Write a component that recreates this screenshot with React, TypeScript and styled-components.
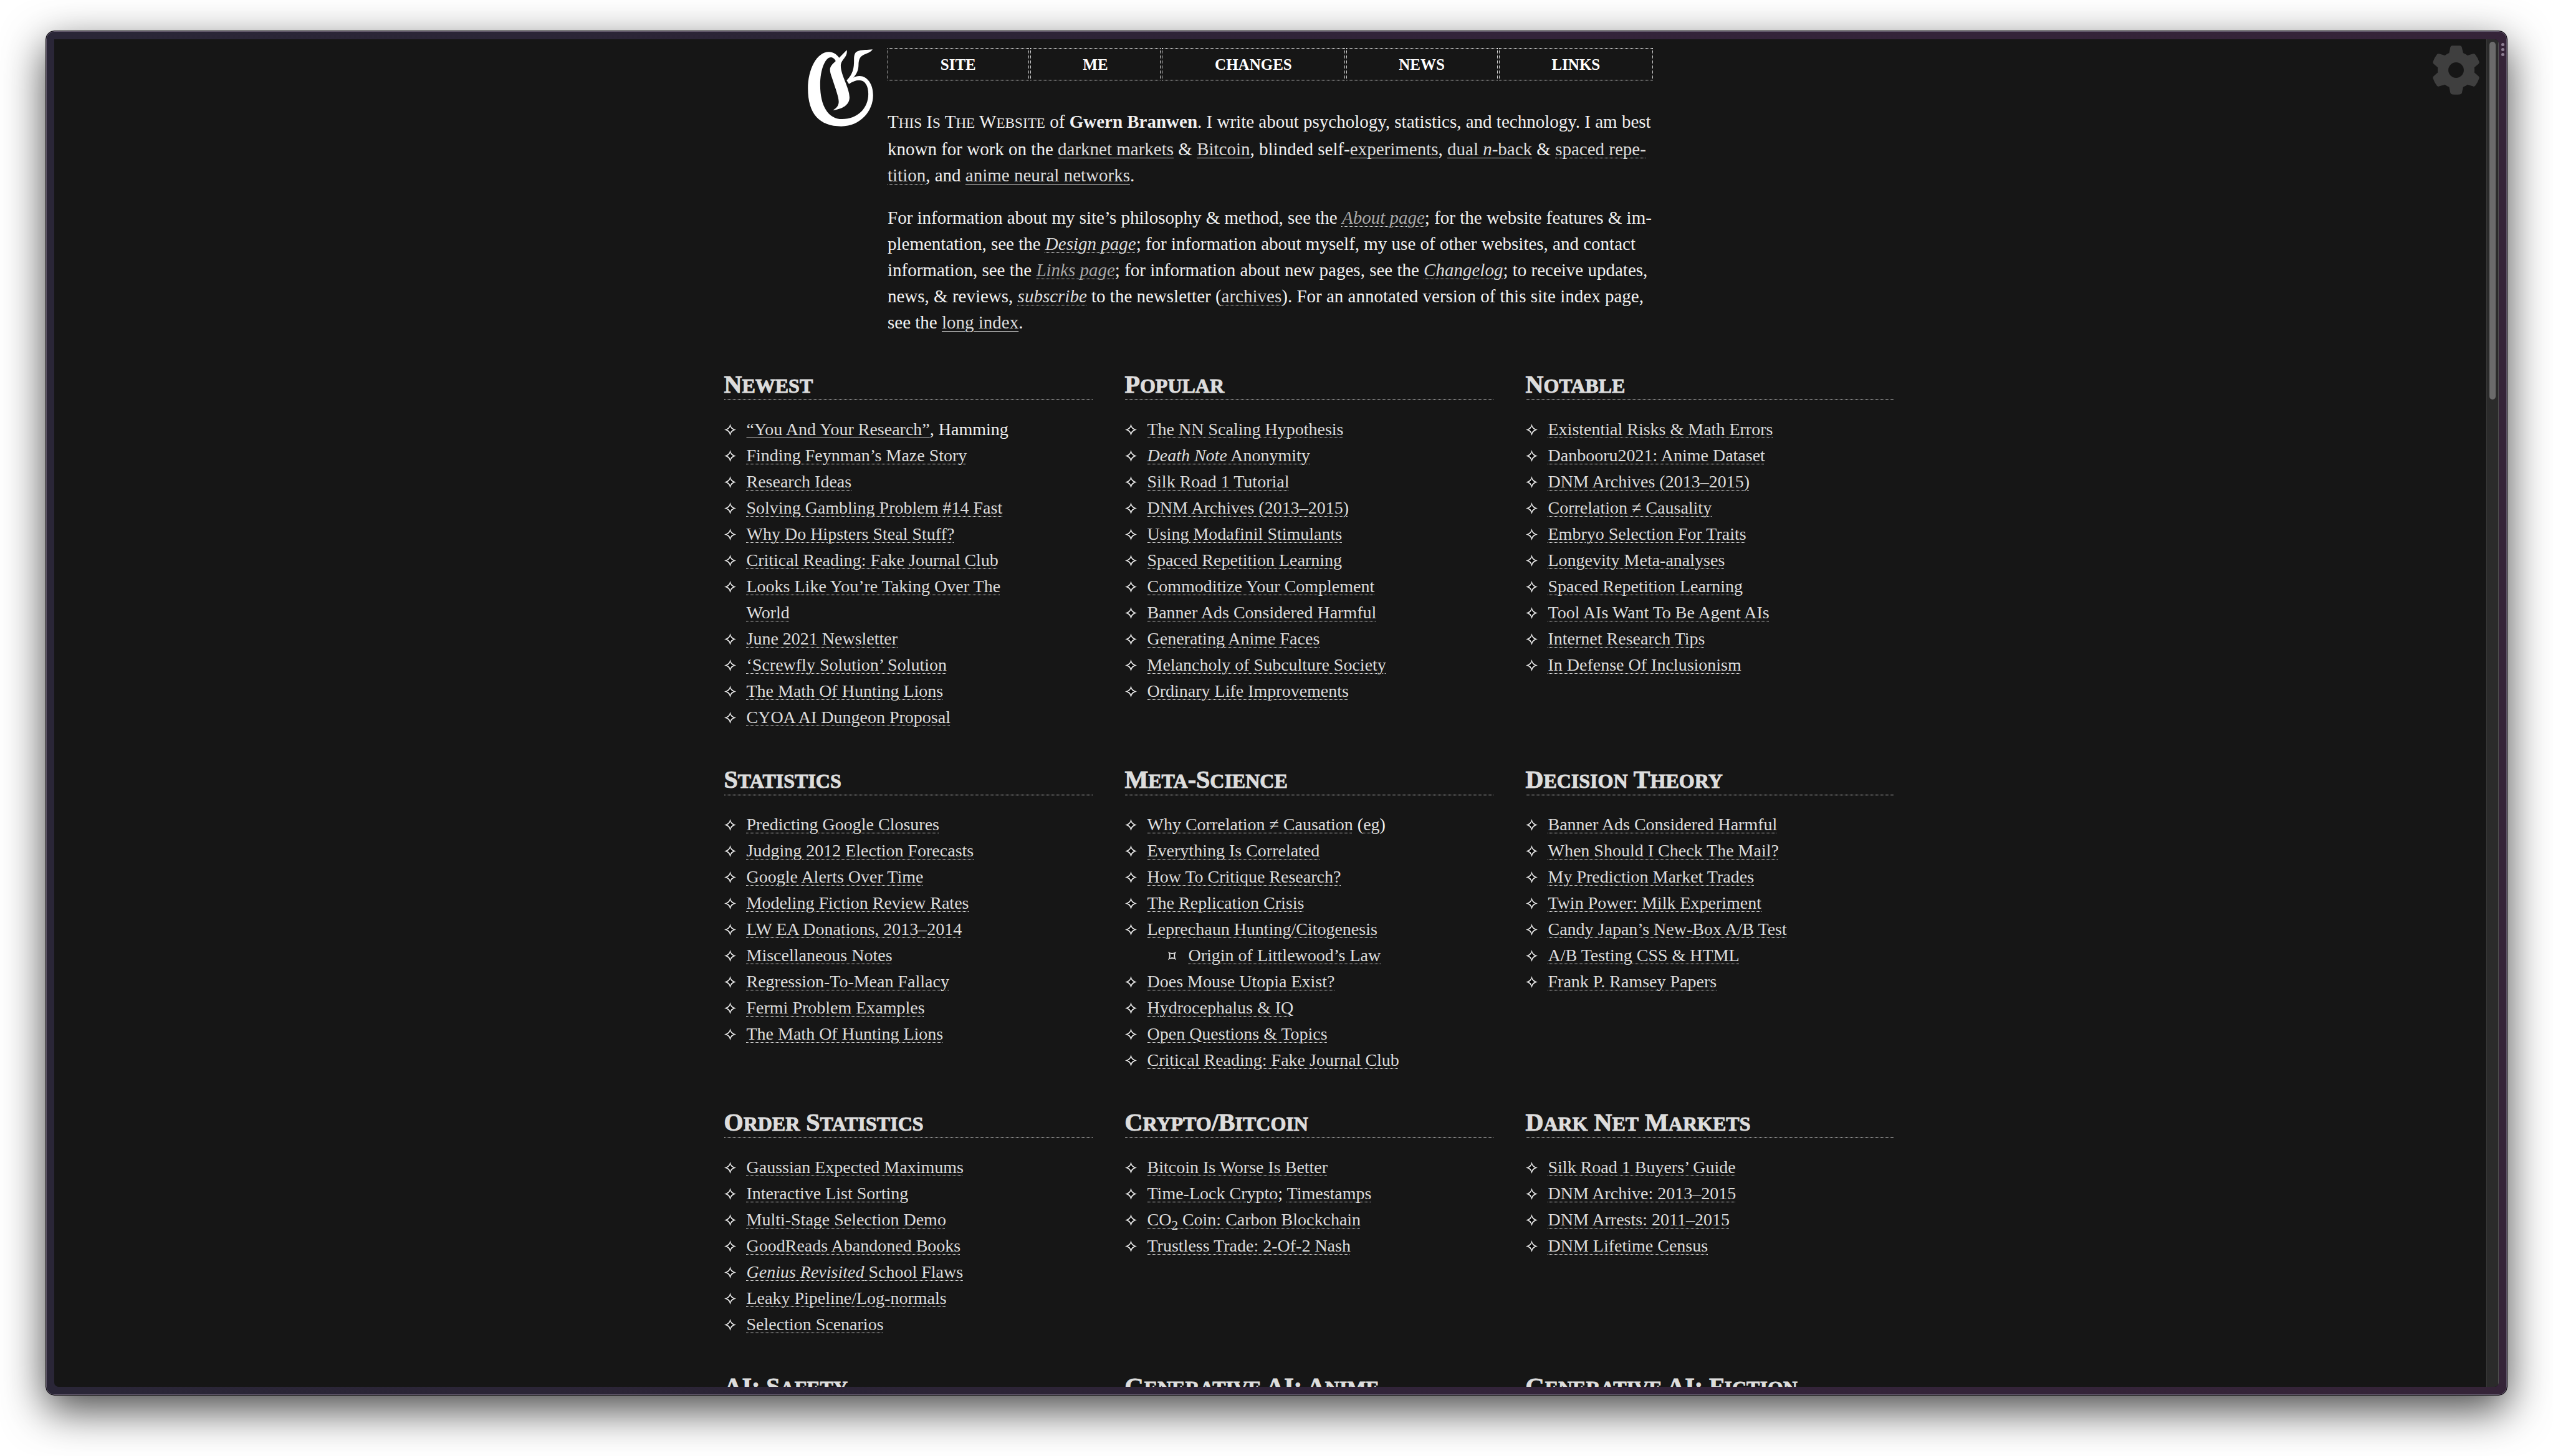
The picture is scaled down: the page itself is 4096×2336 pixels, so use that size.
import React from "react";
import styled, { createGlobalStyle } from "styled-components";

const serif = `"Liberation Serif", "Times New Roman", serif`;

const GlobalStyle = createGlobalStyle`
  *, *::before, *::after { box-sizing: border-box; }
  html, body, #root { height: 100%; margin: 0; }
  body { background: #fff; font-family: ${serif}; overflow: hidden; }
`;

const Desktop = styled.div`
  display: flex;
  height: 100vh;
  padding: 49px 73px 97px;
`;

const Window = styled.div`
  flex: 1;
  display: flex;
  min-width: 0;
  position: relative;
  padding: 13px;
  border: 1px solid #08060a;
  border-radius: 14px;
  background: linear-gradient(90deg, #2a2637 0%, #2c2436 38%, #33243a 60%, #352438 100%);
  box-shadow: inset 0 0 0 1px #635a6c, 0 23px 68px rgba(0, 0, 0, 0.72);
`;

const Viewport = styled.div`
  flex: 1;
  display: flex;
  min-width: 0;
  overflow: hidden;
  position: relative;
  border-radius: 0 7px 7px 7px;
  background: #161616;
`;

const Page = styled.div`
  flex: 1;
  min-width: 0;
  padding-top: 14px;
  overflow: hidden;
  color: #f1f1f1;
  font-size: 28px;
  line-height: 42px;
`;

const Scrollbar = styled.div`
  display: flex;
  width: 20px;
  padding: 4px 4px 0;
  border-left: 1px solid #3c3c3c;
  border-right: 1px solid #4d4d4d;
  background: #2b2b2b;
`;

const Thumb = styled.div`
  flex: 1;
  height: 574px;
  border-radius: 6px;
  background: #6b6b6b;
`;

const Dots = styled.div`
  position: absolute;
  top: 19px;
  right: 4px;
  display: grid;
  gap: 3px;
`;

const Dot = styled.span`
  width: 5px;
  height: 5px;
  border-radius: 50%;
  background: #8d7f93;
`;

const SettingsButton = styled.button`
  position: absolute;
  top: 10px;
  right: 31px;
  display: block;
  padding: 0;
  border: 0;
  background: none;
  color: #3f3f3f;
  cursor: pointer;

  svg { display: block; }
`;

const Intro = styled.header`
  display: grid;
  grid-template-columns: 1fr minmax(0, 1228px) 1fr;
  column-gap: 23px;
`;

const LogoLink = styled.a`
  justify-self: end;
  align-self: start;
  padding-top: 2px;

  svg { display: block; }
`;

const Nav = styled.nav`
  display: flex;
  gap: 2px;
`;

const NavLink = styled.a`
  flex: 1 1 auto;
  padding: 5px 0 3px;
  border: 1px dotted #fff;
  color: #fff;
  font-size: 25px;
  font-weight: 700;
  text-align: center;
  text-decoration: none;
  text-transform: uppercase;
`;

const Prose = styled.div`
  padding-top: 45px;
  font-size: 29px;
  white-space: nowrap;
`;

const Paragraph = styled.p`
  margin: 0 0 26px;

  &:last-child { margin-bottom: 0; }
`;

const Link = styled.a<{ $solid?: boolean; $dim?: boolean }>`
  color: ${(p) => (p.$dim ? "#a8a8a8" : "#dddddd")};
  text-decoration: underline ${(p) => (p.$solid ? "solid #dddddd" : "dotted #ffffff")} 1px;
  text-underline-offset: 4px;
`;

const Small = styled.span`
  font-size: 0.8em;
  text-transform: uppercase;
`;

const Directory = styled.main`
  display: grid;
  grid-template-columns: repeat(3, minmax(0, 591px));
  justify-content: center;
  gap: 57px 52px;
  padding: 57px 0 0 124px;
`;

const Heading = styled.h2`
  margin: 0 0 26px;
  border-bottom: 1px dotted #fff;
  color: #dddddd;
  font-size: 40px;
  line-height: 44px;
  -webkit-text-stroke: 1px #dddddd;
`;

const List = styled.ul<{ $nested?: boolean }>`
  margin: 0;
  padding: ${(p) => (p.$nested ? "0 0 0 30px" : "0 120px 0 0")};
  list-style: none;
`;

const Item = styled.li`
  display: grid;
  grid-template-columns: 19px 1fr;
  column-gap: 17px;
`;

const ItemBody = styled.div`
  min-width: 0;
`;

const Bullet = styled.svg`
  justify-self: center;
  margin-top: 12px;
`;

const Sub = styled.sub`
  font-size: 21px;
  line-height: 0;
`;

function SmallCaps({ text }: { text: string }) {
  return (
    <>
      {text.split(/([a-z]+)/).map((part, i) =>
        i % 2 ? <Small key={i}>{part}</Small> : part
      )}
    </>
  );
}

function Star({ nested }: { nested?: boolean }) {
  return (
    <Bullet width="19" height="19" viewBox="-10 -10 20 20" aria-hidden="true">
      <g transform={nested ? "rotate(45)" : undefined}>
        <path d="M0-10Q1.6-1.6 10 0Q1.6 1.6 0 10Q-1.6 1.6-10 0Q-1.6-1.6 0-10Z" fill="#e4e4e4" />
        <path d="M0-5.4Q1.2-1.2 5.4 0Q1.2 1.2 0 5.4Q-1.2 1.2-5.4 0Q-1.2-1.2 0-5.4Z" fill="#000" />
      </g>
    </Bullet>
  );
}

function Logo() {
  return (
    <svg width="105" height="124" viewBox="45 47 480 566" role="img" aria-label="Home">
      <path
        fill="#fff"
        d="M331 52L275 109C255 82 230 66 200 66C110 66 46 195 46 335C46 520 130 612 290 612C430 612 524 500 524 385C524 300 480 243 425 243C405 243 390 247 378 256C405 225 416 200 417 165C418 115 430 96 470 81C500 70 512 60 520 48C480 53 450 49 420 58C390 66 384 85 384 125C384 185 378 225 330 275L347 301C375 283 400 274 422 274C465 274 489 315 489 375C489 480 410 559 297 559C195 559 136 460 136 310C136 190 175 106 214 106C230 106 242 118 250 133C222 158 208 175 208 196C208 215 214 230 222 255C250 340 272 400 272 432C272 460 255 480 229 494C300 486 351 455 351 400C351 330 287 235 287 170C287 120 340 105 331 52Z"
      />
    </svg>
  );
}

function Gear() {
  return (
    <svg width="75" height="79" viewBox="320 215 342 362" aria-hidden="true">
      <path
        fill="currentColor"
        fillRule="evenodd"
        d="M464 216H518Q530 216 533 226L543 270Q560 277 575 288L616 276Q626 273 632 281Q651 304 661 335Q663 343 656 350L625 376Q628 396 625 413L656 441Q663 448 661 456Q651 487 632 510Q626 518 616 515L575 502Q560 514 543 520L534 563Q531 574 518 575Q491 577 464 575Q452 574 449 563L440 520Q423 514 409 502L366 515Q356 518 350 510Q331 487 321 456Q319 448 326 441L357 413Q355 396 357 376L326 350Q319 343 321 335Q331 304 350 281Q356 273 366 276L409 288Q423 277 440 270L449 226Q452 216 464 216ZM491 339A57 57 0 1 0 491 453A57 57 0 1 0 491 339Z"
      />
    </svg>
  );
}

type Entry = React.ReactNode;

const link = (text: React.ReactNode, solid = false) => (
  <Link href="#" $solid={solid}>{text}</Link>
);

const sections: { title: string; items: Entry[] }[] = [
  {
    title: "Newest",
    items: [
      <>{link("“You And Your Research”", true)}, Hamming</>,
      "Finding Feynman’s Maze Story",
      "Research Ideas",
      "Solving Gambling Problem #14 Fast",
      "Why Do Hipsters Steal Stuff?",
      "Critical Reading: Fake Journal Club",
      "Looks Like You’re Taking Over The World",
      "June 2021 Newsletter",
      "‘Screwfly Solution’ Solution",
      "The Math Of Hunting Lions",
      "CYOA AI Dungeon Proposal",
    ],
  },
  {
    title: "Popular",
    items: [
      "The NN Scaling Hypothesis",
      link(<><i>Death Note</i> Anonymity</>),
      "Silk Road 1 Tutorial",
      "DNM Archives (2013–2015)",
      "Using Modafinil Stimulants",
      "Spaced Repetition Learning",
      "Commoditize Your Complement",
      "Banner Ads Considered Harmful",
      "Generating Anime Faces",
      "Melancholy of Subculture Society",
      "Ordinary Life Improvements",
    ],
  },
  {
    title: "Notable",
    items: [
      "Existential Risks & Math Errors",
      "Danbooru2021: Anime Dataset",
      "DNM Archives (2013–2015)",
      "Correlation ≠ Causality",
      "Embryo Selection For Traits",
      "Longevity Meta-analyses",
      "Spaced Repetition Learning",
      "Tool AIs Want To Be Agent AIs",
      "Internet Research Tips",
      "In Defense Of Inclusionism",
    ],
  },
  {
    title: "Statistics",
    items: [
      "Predicting Google Closures",
      "Judging 2012 Election Forecasts",
      "Google Alerts Over Time",
      "Modeling Fiction Review Rates",
      "LW EA Donations, 2013–2014",
      "Miscellaneous Notes",
      "Regression-To-Mean Fallacy",
      "Fermi Problem Examples",
      "The Math Of Hunting Lions",
    ],
  },
  {
    title: "Meta-Science",
    items: [
      <>{link("Why Correlation ≠ Causation")} ({link("eg")})</>,
      "Everything Is Correlated",
      "How To Critique Research?",
      "The Replication Crisis",
      <>
        {link("Leprechaun Hunting/Citogenesis")}
        <List $nested>
          <Item>
            <Star nested />
            <ItemBody>{link("Origin of Littlewood’s Law")}</ItemBody>
          </Item>
        </List>
      </>,
      "Does Mouse Utopia Exist?",
      "Hydrocephalus & IQ",
      "Open Questions & Topics",
      "Critical Reading: Fake Journal Club",
    ],
  },
  {
    title: "Decision Theory",
    items: [
      "Banner Ads Considered Harmful",
      "When Should I Check The Mail?",
      "My Prediction Market Trades",
      "Twin Power: Milk Experiment",
      "Candy Japan’s New-Box A/B Test",
      "A/B Testing CSS & HTML",
      "Frank P. Ramsey Papers",
    ],
  },
  {
    title: "Order Statistics",
    items: [
      "Gaussian Expected Maximums",
      "Interactive List Sorting",
      "Multi-Stage Selection Demo",
      "GoodReads Abandoned Books",
      link(<><i>Genius Revisited</i> School Flaws</>),
      "Leaky Pipeline/Log-normals",
      "Selection Scenarios",
    ],
  },
  {
    title: "Crypto/Bitcoin",
    items: [
      "Bitcoin Is Worse Is Better",
      <>{link("Time-Lock Crypto")}; {link("Timestamps")}</>,
      link(<>CO<Sub>2</Sub> Coin: Carbon Blockchain</>),
      "Trustless Trade: 2-Of-2 Nash",
    ],
  },
  {
    title: "Dark Net Markets",
    items: [
      "Silk Road 1 Buyers’ Guide",
      "DNM Archive: 2013–2015",
      "DNM Arrests: 2011–2015",
      "DNM Lifetime Census",
    ],
  },
  { title: "AI: Safety", items: [] },
  { title: "Generative AI: Anime", items: [] },
  { title: "Generative AI: Fiction", items: [] },
];

const navItems = ["Site", "Me", "Changes", "News", "Links"];

export default function App() {
  return (
    <Desktop>
      <GlobalStyle />
      <Window>
        <Viewport>
          <Page>
            <Intro>
              <LogoLink href="#"><Logo /></LogoLink>
              <div>
                <Nav>
                  {navItems.map((n) => (
                    <NavLink key={n} href="#">{n}</NavLink>
                  ))}
                </Nav>
                <Prose>
                  <Paragraph>
                    <SmallCaps text="This Is The Website" /> of <b>Gwern Branwen</b>. I write about psychology, statistics, and technology. I am best<br />
                    known for work on the <Link $solid href="#">darknet markets</Link> & <Link $solid href="#">Bitcoin</Link>, blinded self-<Link $solid href="#">experiments</Link>, <Link $solid href="#">dual <i>n</i>-back</Link> & <Link href="#">spaced repe-<br />
                    tition</Link>, and <Link $solid href="#">anime neural networks</Link>.
                  </Paragraph>
                  <Paragraph>
                    For information about my site’s philosophy & method, see the <Link $dim href="#"><i>About page</i></Link>; for the website features & im-<br />
                    plementation, see the <Link href="#"><i>Design page</i></Link>; for information about myself, my use of other websites, and contact<br />
                    information, see the <Link $dim href="#"><i>Links page</i></Link>; for information about new pages, see the <Link href="#"><i>Changelog</i></Link>; to receive updates,<br />
                    news, & reviews, <Link href="#"><i>subscribe</i></Link> to the newsletter (<Link href="#">archives</Link>). For an annotated version of this site index page,<br />
                    see the <Link $solid href="#">long index</Link>.
                  </Paragraph>
                </Prose>
              </div>
            </Intro>
            <Directory>
              {sections.map((s) => (
                <section key={s.title}>
                  <Heading><SmallCaps text={s.title} /></Heading>
                  <List>
                    {s.items.map((item, i) => (
                      <Item key={i}>
                        <Star />
                        <ItemBody>{typeof item === "string" ? link(item) : item}</ItemBody>
                      </Item>
                    ))}
                  </List>
                </section>
              ))}
            </Directory>
          </Page>
          <Scrollbar><Thumb /></Scrollbar>
          <SettingsButton type="button" aria-label="Settings"><Gear /></SettingsButton>
        </Viewport>
        <Dots><Dot /><Dot /><Dot /></Dots>
      </Window>
    </Desktop>
  );
}
